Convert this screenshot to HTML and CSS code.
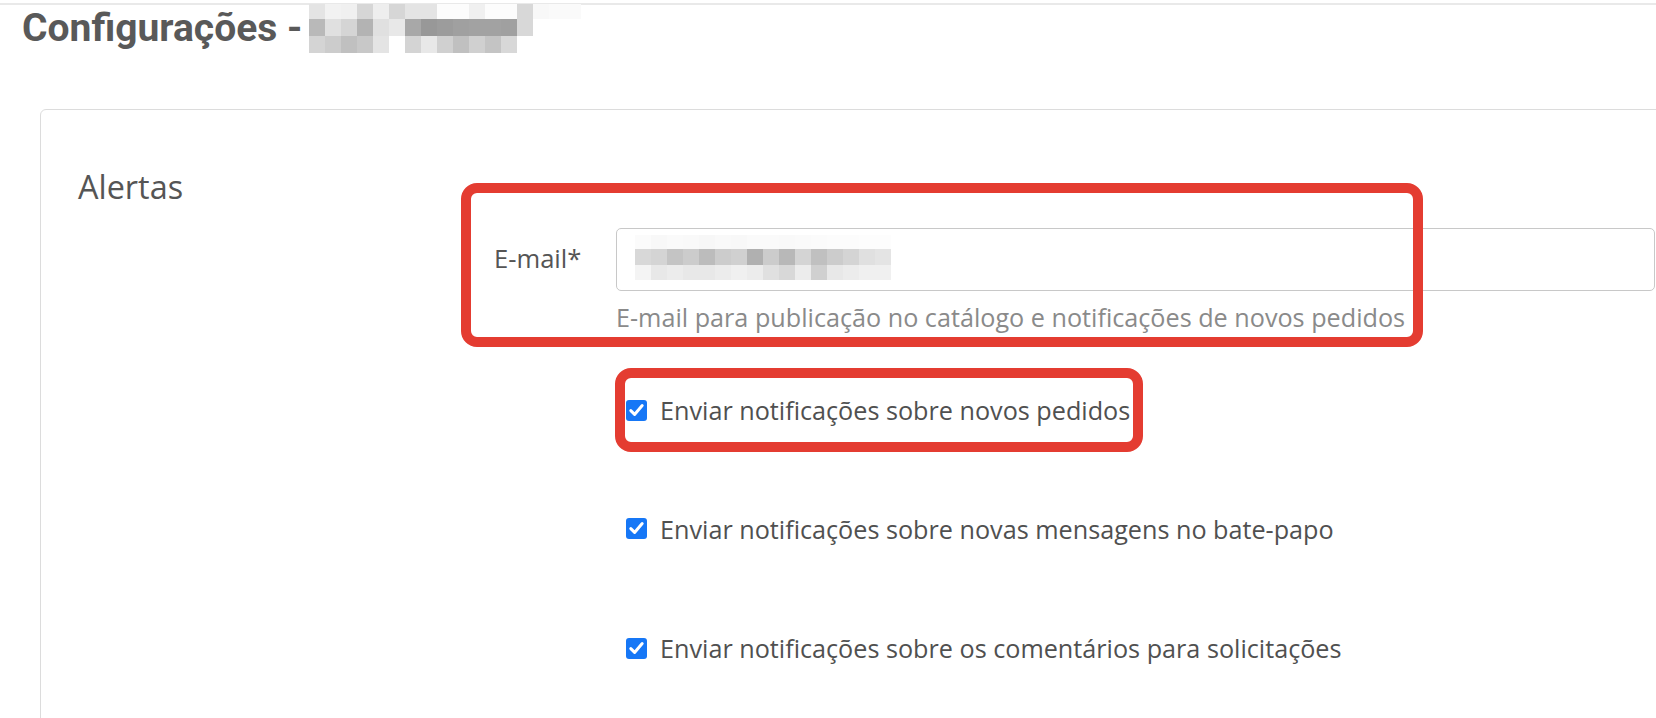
FILE: index.html
```html
<!DOCTYPE html>
<html lang="pt">
<head>
<meta charset="utf-8">
<title>Configurações</title>
<link rel="stylesheet" href="styles.css">
</head>
<body>
<div class="topline"></div>
<header class="header">
  <h1 class="title">Configurações -</h1>
  <svg class="redact" width="272" height="49" viewBox="0 0 272 49" aria-hidden="true">
    <g>
      <rect x="0" y="0" width="16" height="15" fill="#e4e4e4"/><rect x="16" y="0" width="16" height="15" fill="#f2f2f2"/><rect x="32" y="0" width="16" height="15" fill="#f0f0f0"/><rect x="48" y="0" width="16" height="15" fill="#d6d6d6"/><rect x="64" y="0" width="16" height="15" fill="#eeeeee"/><rect x="80" y="0" width="16" height="15" fill="#d6d6d6"/><rect x="96" y="0" width="16" height="15" fill="#e4e4e4"/><rect x="112" y="0" width="16" height="15" fill="#e4e4e4"/><rect x="128" y="0" width="16" height="15" fill="#fcfcfc"/><rect x="144" y="0" width="16" height="15" fill="#fcfcfc"/><rect x="160" y="0" width="16" height="15" fill="#f0f0f0"/><rect x="176" y="0" width="16" height="15" fill="#fcfcfc"/><rect x="192" y="0" width="16" height="15" fill="#fcfcfc"/><rect x="208" y="0" width="16" height="15" fill="#d8d8d8"/><rect x="224" y="0" width="16" height="15" fill="#f8f8f8"/><rect x="240" y="0" width="16" height="15" fill="#fafafa"/><rect x="256" y="0" width="16" height="15" fill="#fafafa"/>
    </g>
    <g>
      <rect x="0" y="15" width="16" height="17" fill="#b9b9b9"/><rect x="16" y="15" width="16" height="17" fill="#e0e0e0"/><rect x="32" y="15" width="16" height="17" fill="#d5d5d5"/><rect x="48" y="15" width="16" height="17" fill="#b3b3b3"/><rect x="64" y="15" width="16" height="17" fill="#e0e0e0"/><rect x="80" y="15" width="16" height="17" fill="#e8e8e8"/><rect x="96" y="15" width="16" height="17" fill="#a8a8a8"/><rect x="112" y="15" width="16" height="17" fill="#989898"/><rect x="128" y="15" width="16" height="17" fill="#9c9c9c"/><rect x="144" y="15" width="16" height="17" fill="#a0a0a0"/><rect x="160" y="15" width="16" height="17" fill="#a2a2a2"/><rect x="176" y="15" width="16" height="17" fill="#a2a2a2"/><rect x="192" y="15" width="16" height="17" fill="#a0a0a0"/><rect x="208" y="15" width="16" height="17" fill="#d8d8d8"/>
    </g>
    <g>
      <rect x="0" y="32" width="16" height="17" fill="#d4d4d4"/><rect x="16" y="32" width="16" height="17" fill="#cccccc"/><rect x="32" y="32" width="16" height="17" fill="#c0c0c0"/><rect x="48" y="32" width="16" height="17" fill="#c8c8c8"/><rect x="64" y="32" width="16" height="17" fill="#e4e4e4"/><rect x="96" y="32" width="16" height="17" fill="#d4d4d4"/><rect x="112" y="32" width="16" height="17" fill="#e8e8e8"/><rect x="128" y="32" width="16" height="17" fill="#d0d0d0"/><rect x="144" y="32" width="16" height="17" fill="#c0c0c0"/><rect x="160" y="32" width="16" height="17" fill="#d0d0d0"/><rect x="176" y="32" width="16" height="17" fill="#c4c4c4"/><rect x="192" y="32" width="16" height="17" fill="#d8d8d8"/>
    </g>
  </svg>
</header>

<main class="card">
  <h2 class="section-title">Alertas</h2>
  <div class="form">
    <div class="field">
      <div class="annot annot-email"></div>
      <div class="field-row">
        <label class="field-label">E-mail*</label>
        <div class="input">
          <svg width="256" height="45" viewBox="0 0 256 45" aria-hidden="true">
            <g>
              <rect x="0" y="0" width="16" height="14" fill="#fbfbfb"/><rect x="16" y="0" width="16" height="14" fill="#f8f8f8"/><rect x="32" y="0" width="16" height="14" fill="#fafafa"/><rect x="48" y="0" width="16" height="14" fill="#f9f9f9"/><rect x="64" y="0" width="16" height="14" fill="#f7f7f7"/><rect x="80" y="0" width="16" height="14" fill="#f9f9f9"/><rect x="96" y="0" width="16" height="14" fill="#f8f8f8"/><rect x="112" y="0" width="16" height="14" fill="#fafafa"/><rect x="128" y="0" width="16" height="14" fill="#fafafa"/><rect x="144" y="0" width="16" height="14" fill="#f9f9f9"/><rect x="160" y="0" width="16" height="14" fill="#fafafa"/><rect x="176" y="0" width="16" height="14" fill="#fbfbfb"/><rect x="192" y="0" width="16" height="14" fill="#fcfcfc"/><rect x="208" y="0" width="16" height="14" fill="#fcfcfc"/><rect x="224" y="0" width="16" height="14" fill="#fdfdfd"/><rect x="240" y="0" width="16" height="14" fill="#fdfdfd"/>
            </g>
            <g>
              <rect x="0" y="14" width="16" height="16" fill="#d8d8d8"/><rect x="16" y="14" width="16" height="16" fill="#d4d4d4"/><rect x="32" y="14" width="16" height="16" fill="#c4c4c4"/><rect x="48" y="14" width="16" height="16" fill="#cccccc"/><rect x="64" y="14" width="16" height="16" fill="#bcbcbc"/><rect x="80" y="14" width="16" height="16" fill="#cccccc"/><rect x="96" y="14" width="16" height="16" fill="#d0d0d0"/><rect x="112" y="14" width="16" height="16" fill="#b0b0b0"/><rect x="128" y="14" width="16" height="16" fill="#cccccc"/><rect x="144" y="14" width="16" height="16" fill="#b8b8b8"/><rect x="160" y="14" width="16" height="16" fill="#d4d4d4"/><rect x="176" y="14" width="16" height="16" fill="#c0c0c0"/><rect x="192" y="14" width="16" height="16" fill="#cccccc"/><rect x="208" y="14" width="16" height="16" fill="#d4d4d4"/><rect x="224" y="14" width="16" height="16" fill="#e0e0e0"/><rect x="240" y="14" width="16" height="16" fill="#e4e4e4"/>
            </g>
            <g>
              <rect x="0" y="30" width="16" height="15" fill="#f4f4f4"/><rect x="16" y="30" width="16" height="15" fill="#e8e8e8"/><rect x="32" y="30" width="16" height="15" fill="#ececec"/><rect x="48" y="30" width="16" height="15" fill="#e8e8e8"/><rect x="64" y="30" width="16" height="15" fill="#e8e8e8"/><rect x="80" y="30" width="16" height="15" fill="#ececec"/><rect x="96" y="30" width="16" height="15" fill="#f0f0f0"/><rect x="112" y="30" width="16" height="15" fill="#ececec"/><rect x="128" y="30" width="16" height="15" fill="#e0e0e0"/><rect x="144" y="30" width="16" height="15" fill="#d8d8d8"/><rect x="160" y="30" width="16" height="15" fill="#ececec"/><rect x="176" y="30" width="16" height="15" fill="#d0d0d0"/><rect x="192" y="30" width="16" height="15" fill="#e8e8e8"/><rect x="208" y="30" width="16" height="15" fill="#ececec"/><rect x="224" y="30" width="16" height="15" fill="#f0f0f0"/><rect x="240" y="30" width="16" height="15" fill="#f0f0f0"/>
            </g>
          </svg>
        </div>
      </div>
      <p class="help">E-mail para publicação no catálogo e notificações de novos pedidos</p>
    </div>

    <div class="check first">
      <div class="annot annot-check"></div>
      <span class="box"><svg width="21" height="21" viewBox="0 0 21 21" aria-hidden="true"><path d="M4.8 10.6 L8.6 14.4 L16.2 5.6" fill="none" stroke="#fff" stroke-width="3" stroke-linecap="round" stroke-linejoin="round"/></svg></span>
      <span class="check-label">Enviar notificações sobre novos pedidos</span>
    </div>
    <div class="check">
      <span class="box"><svg width="21" height="21" viewBox="0 0 21 21" aria-hidden="true"><path d="M4.8 10.6 L8.6 14.4 L16.2 5.6" fill="none" stroke="#fff" stroke-width="3" stroke-linecap="round" stroke-linejoin="round"/></svg></span>
      <span class="check-label">Enviar notificações sobre novas mensagens no bate-papo</span>
    </div>
    <div class="check last">
      <span class="box"><svg width="21" height="21" viewBox="0 0 21 21" aria-hidden="true"><path d="M4.8 10.6 L8.6 14.4 L16.2 5.6" fill="none" stroke="#fff" stroke-width="3" stroke-linecap="round" stroke-linejoin="round"/></svg></span>
      <span class="check-label">Enviar notificações sobre os comentários para solicitações</span>
    </div>
  </div>
</main>
</body>
</html>
```
FILE: styles.css
```css
html, body {
  margin: 0;
  padding: 0;
  overflow: hidden;
  background: #ffffff;
}

body {
  font-family: "Open Sans", "Liberation Sans", sans-serif;
  color: #555555;
  width: 1656px;
  height: 718px;
}

.topline {
  height: 2px;
  margin-top: 3px;
  background: #e9e9e9;
}

.header {
  display: flex;
  align-items: flex-start;
  gap: 7px;
  margin-top: -1px;
  padding-left: 22px;
  height: 49px;
}

.title {
  margin: 0;
  font-family: Roboto, "Liberation Sans", sans-serif;
  font-weight: 700;
  font-size: 39px;
  line-height: 49px;
  color: #595959;
  white-space: nowrap;
}

.redact {
  display: block;
  flex: none;
}

.card {
  box-sizing: border-box;
  display: flex;
  width: 1656px;
  margin: 56px 0 0 40px;
  padding: 57px 40px 80px 37px;
  border: 1px solid #dcdcdc;
  border-radius: 6px;
  min-height: 700px;
}

.section-title {
  flex: none;
  width: 416px;
  margin: 0;
  font-size: 32.4px;
  line-height: 38.4px;
  font-weight: 400;
  color: #555555;
}

.form {
  flex: 1;
  min-width: 0;
  padding-top: 61px;
}

.field {
  position: relative;
}

.field-row {
  display: flex;
  align-items: center;
}

.field-label {
  flex: none;
  width: 122px;
  font-size: 25.6px;
  line-height: 38.4px;
  color: #555555;
}

.input {
  flex: 1;
  box-sizing: border-box;
  height: 63px;
  padding: 6px 18px 0;
  border: 1px solid #c8c8c8;
  border-radius: 5px;
  background: #ffffff;
}

.input svg {
  display: block;
}

.help {
  margin: 7px 0 0 122px;
  font-size: 25.2px;
  line-height: 38.4px;
  color: #8a8a8a;
  white-space: nowrap;
}

.check {
  position: relative;
  display: flex;
  align-items: center;
  gap: 13px;
  margin: 80px 0 0 132px;
  height: 38.4px;
}

.check.first {
  margin-top: 55px;
}

.check.last {
  margin-top: 81px;
}

.box {
  flex: none;
  width: 21px;
  height: 21px;
  border-radius: 3px;
  background: #1677f6;
}

.box svg {
  display: block;
}

.check-label {
  font-size: 25.2px;
  line-height: 38.4px;
  color: #505050;
  white-space: nowrap;
}

.annot {
  position: absolute;
  box-sizing: border-box;
  border: 10px solid #e43c31;
  border-radius: 16px;
  pointer-events: none;
}

.annot-email {
  left: -33px;
  top: -45px;
  width: 962px;
  height: 164px;
}

.annot-check {
  left: -11px;
  top: -23px;
  width: 528px;
  height: 84px;
}
```
